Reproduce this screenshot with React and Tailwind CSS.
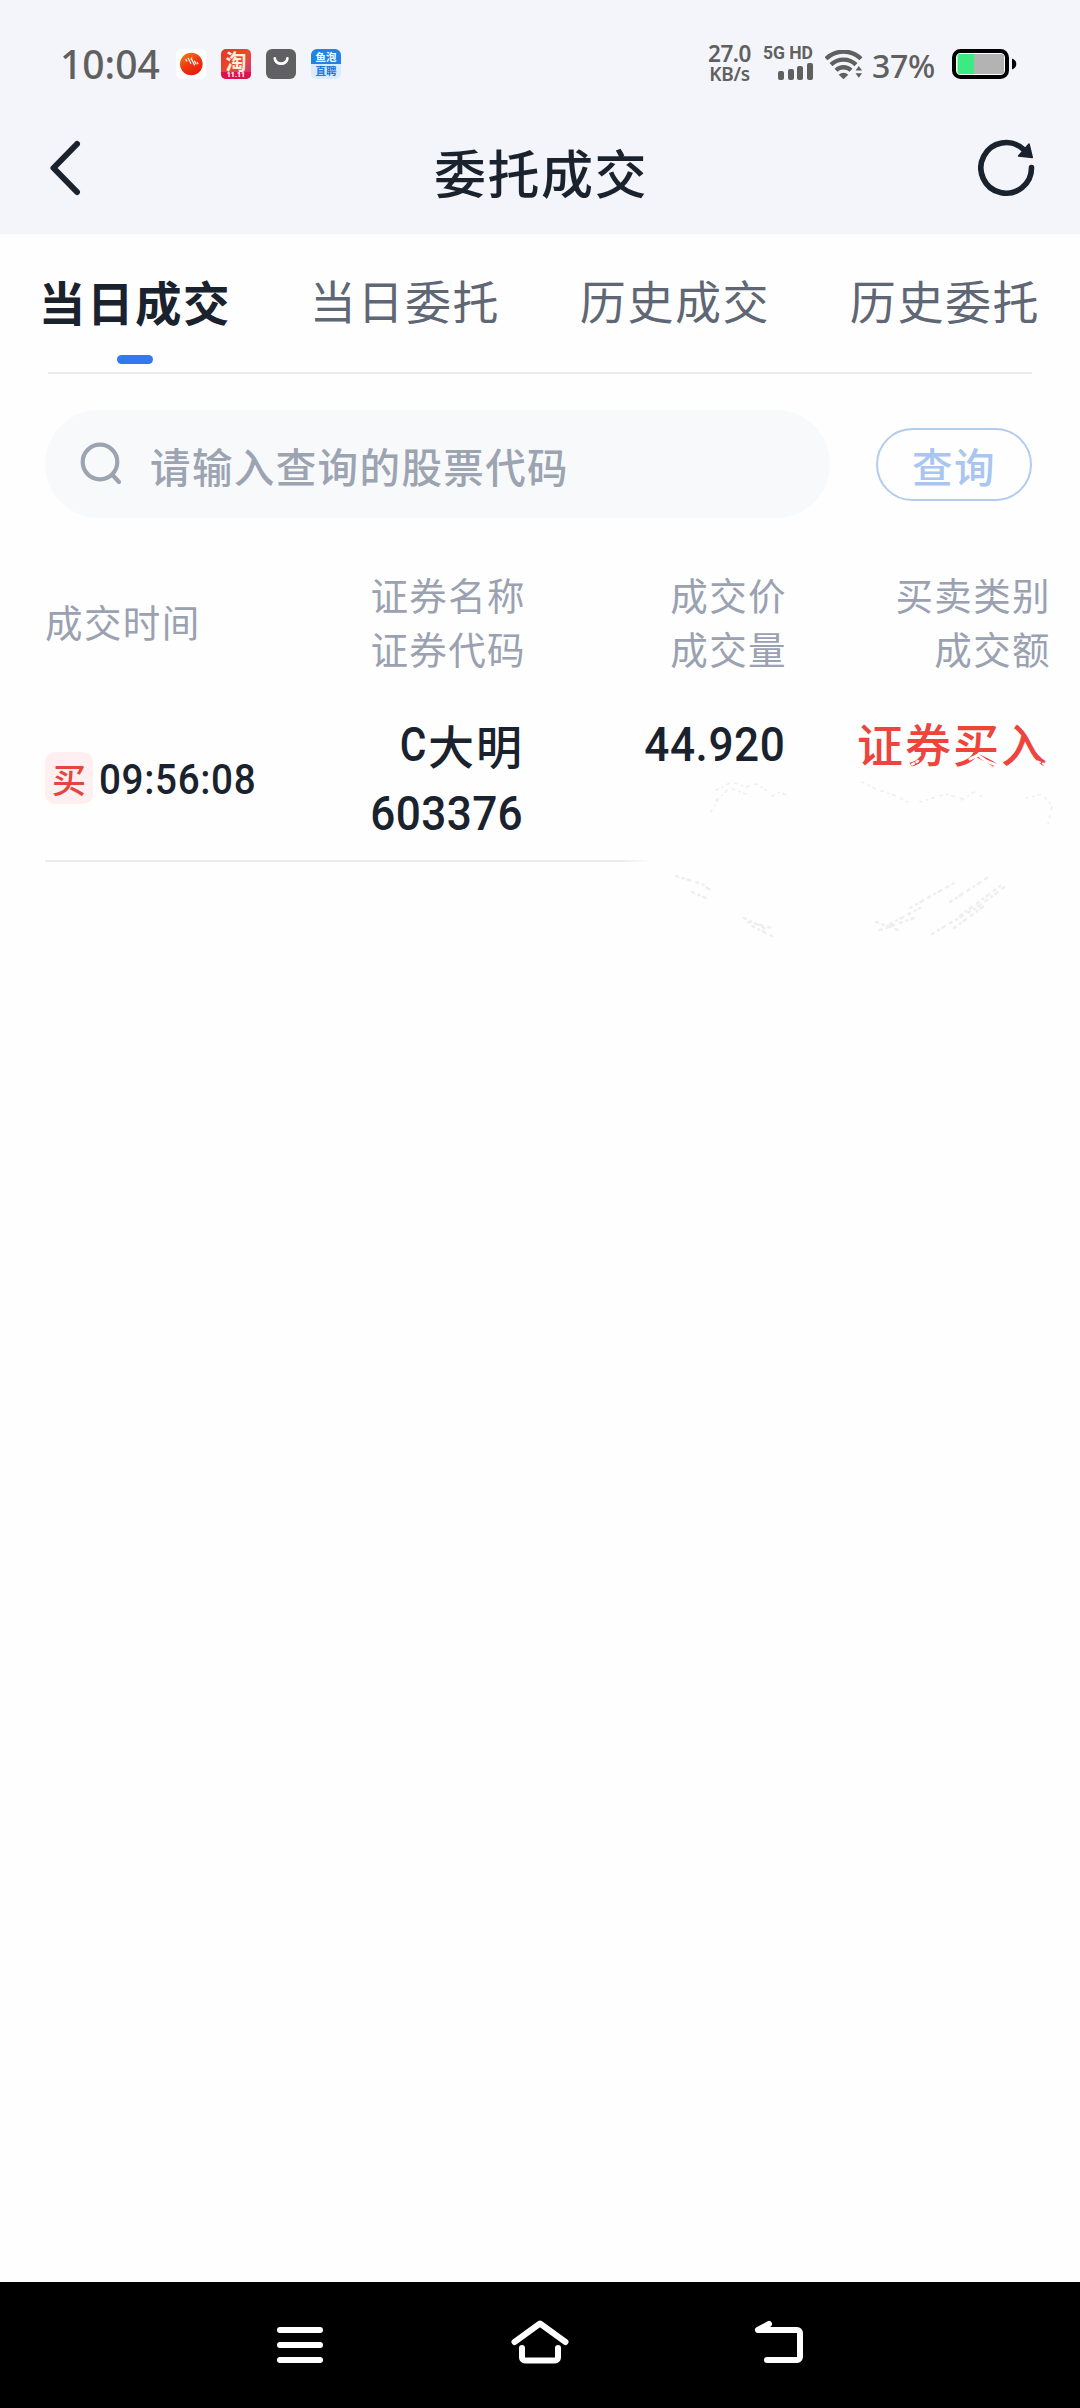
function NotificationIcons() {
  return (
    <div className="ml-[13px] flex gap-[15px] pt-[49px]">
      <svg width="30" height="30" viewBox="0 0 30 30">
        <defs>
          <linearGradient id="ball" x1="0" y1="0" x2="0.6" y2="1">
            <stop offset="0" stopColor="#f08a1c" />
            <stop offset="0.55" stopColor="#ee3a10" />
            <stop offset="1" stopColor="#ea1c0c" />
          </linearGradient>
        </defs>
        <rect width="30" height="30" rx="5" fill="#fff" />
        <circle cx="15.3" cy="15" r="11.3" fill="url(#ball)" />
        <path d="M9.800 10.500l1 1.600M12.200 9.300l2.600 5M15.800 9l-.8 1M15.800 10.500l2.600 5.500M18.600 12l1.400 3M21.300 13.500l.6 1.300" stroke="#fff" strokeWidth="1.2" strokeLinecap="round" />
      </svg>
      <div className="flex h-[30px] w-[30px] flex-col overflow-hidden rounded-[5px] bg-linear-to-br from-[#e5322c] via-[#ea4a2c] to-[#c42a86] text-center">
        <span className="h-[23px] font-['Noto_Sans_CJK_SC',sans-serif] text-[21px] leading-[22px] font-bold text-[#fff0dc]">淘</span>
        <span className="h-[7px] bg-[#e0104c] font-['Roboto',sans-serif] text-[7px] leading-[7px] font-black text-white">11.11</span>
      </div>
      <svg width="30" height="30" viewBox="0 0 30 30">
        <rect width="30" height="30" rx="6" fill="#606062" />
        <path d="M8.800 9.300a6.300 5.400 0 0 0 12.600 0" fill="none" stroke="#fff" strokeWidth="2.700" strokeLinecap="round" />
      </svg>
      <div className="flex h-[30px] w-[30px] flex-col overflow-hidden rounded-[6px] text-center font-['Noto_Sans_CJK_SC',sans-serif] text-[10.5px] font-bold">
        <span className="h-[15px] bg-[#2283e4] leading-[16px] text-white">鱼泡</span>
        <span className="h-[15px] bg-[#d9ebfe] leading-[14px] text-[#2077d8]">直聘</span>
      </div>
    </div>
  );
}

function StatusBar() {
  return (
    <div className="flex h-[100px] items-start pl-[60px] text-[#606060]">
      <div className="w-[103px] pt-[37px] font-['Noto_Sans',sans-serif] text-[39px] leading-[54px] font-medium whitespace-nowrap">10:04</div>
      <NotificationIcons />
      <div className="ml-auto flex items-start font-['Noto_Sans',sans-serif] font-medium">
        <div className="w-[47px] pt-[42px] text-center font-semibold whitespace-nowrap">
          <div className="text-[22.500px] leading-[24px] tracking-[-0.5px]">27.0</div>
          <div className="mt-[-1px] text-[19px] leading-[18px] tracking-[-0.3px]">KB/s</div>
        </div>
        <div className="ml-[11px] flex w-[49px] flex-col items-end pt-[45px]">
          <div className="font-['Roboto',sans-serif] text-[17.500px] leading-[16px] font-bold whitespace-nowrap">5G HD</div>
          <div className="mt-[2px] flex h-[17px] items-end gap-[3.7px]">
            <span className="h-[9px] w-[6px] rounded-[2px] bg-[#606060]" />
            <span className="h-[11px] w-[6px] rounded-[2px] bg-[#606060]" />
            <span className="h-[14px] w-[6px] rounded-[2px] bg-[#606060]" />
            <span className="h-[17px] w-[6px] rounded-[2px] bg-[#606060]" />
          </div>
        </div>
        <svg className="mt-[50px] ml-[12px]" width="38" height="30" viewBox="0 0 38 30" fill="none" stroke="#606060" strokeWidth="4.300">
          <path d="M1 8.800a25 25 0 0 1 35 0" />
          <path d="M6 14.600a18 18 0 0 1 25 0" />
          <path d="M11 20.200a11 11 0 0 1 15 0" />
          <path d="M18.500 29.300l-4.800-4.600a7 7 0 0 1 9.600 0z" fill="#606060" stroke="none" />
          <path d="M30.500 20.500l3.300-4.500 3.300 4.500zM30.500 23.200l3.300 4.500 3.300-4.500z" fill="#606060" stroke="none" />
        </svg>
        <div className="ml-[9px] w-[67px] pt-[45px] text-[32px] leading-[42px] tracking-[-0.3px] whitespace-nowrap">37%</div>
        <svg className="mt-[49px] mr-[63px] ml-[13px]" width="65" height="30" viewBox="0 0 65 30">
          <rect x="2" y="2" width="53" height="26" rx="6.500" fill="#fff" stroke="#000" strokeWidth="4" />
          <path d="M7.500 5H22v20H7.500a2 2 0 0 1-2-2V7a2 2 0 0 1 2-2z" fill="#3dea82" />
          <path d="M22 5h28a2 2 0 0 1 2 2v16a2 2 0 0 1-2 2H22z" fill="#b3b3b3" />
          <path d="M60 9.500c3 1 4.300 3 4.300 5.500s-1.300 4.500-4.300 5.500z" fill="#000" />
        </svg>
      </div>
    </div>
  );
}

function Header() {
  return (
    <div className="flex h-[134px] items-start justify-between pr-[44px] pl-[50px] text-[#1a222e]">
      <svg className="mt-[40px]" width="54" height="56" viewBox="0 0 54 56" fill="none" stroke="#1a222e" strokeWidth="6" strokeLinecap="round" strokeLinejoin="round">
        <path d="M27 4L3.500 28 27 52" />
      </svg>
      <h1 className="pt-[38px] font-['Noto_Sans_CJK_SC',sans-serif] text-[52px] leading-[68px] font-medium tracking-[1.500px]">委托成交</h1>
      <svg className="mt-[38px]" width="58" height="60" viewBox="0 0 58 60" fill="none">
        <path d="M53.500 29.500A25.300 25.300 0 1 1 45 11" stroke="#1a222e" strokeWidth="5.600" strokeLinecap="round" />
        <path d="M51 6L54.300 19.500 40.500 18z" fill="#1a222e" stroke="#1a222e" strokeWidth="1.500" strokeLinejoin="round" />
      </svg>
    </div>
  );
}

const tabs = ["当日成交", "当日委托", "历史成交", "历史委托"];

function Tabs() {
  return (
    <nav className="h-[138px] font-['Noto_Sans_CJK_SC',sans-serif] text-[46px] leading-[60px] tracking-[1.600px]">
      <div className="grid grid-cols-4 pt-[35px]">
        {tabs.map((tab, i) => (
          <div key={tab} className="flex flex-col items-center">
            <span className={i === 0 ? "mt-[2px] text-[46.500px] font-bold text-[#1a222e]" : "text-[#5f6775]"}>{tab}</span>
            {i === 0 && <span className="mt-[24px] h-[9px] w-[36px] rounded-full bg-[#3478f0]" />}
          </div>
        ))}
      </div>
    </nav>
  );
}

function Search() {
  return (
    <div className="mx-[48px] flex h-[146px] items-center border-t-2 border-[#ebebeb] pt-[36px] font-['Noto_Sans_CJK_SC',sans-serif] text-[40.500px] leading-[54px] font-medium tracking-[1.400px]">
      <div className="-ml-[3px] flex h-[108px] w-[785px] items-center rounded-full bg-[#f8f9fb] pl-[34px] text-[#9ca4b2]">
        <svg width="44" height="46" viewBox="0 0 44 46" fill="none" stroke="#9ca4b2" strokeWidth="4.200">
          <circle cx="21" cy="21" r="17.300" />
          <path d="M33.500 34l6.500 7" strokeLinecap="round" />
        </svg>
        <span className="mt-[4px] ml-[27px]">请输入查询的股票代码</span>
      </div>
      <button className="ml-auto flex h-[73px] w-[156px] items-center justify-center rounded-full border-2 border-[#b3cbec] pt-[3px] text-[#a9c6f0]">查询</button>
    </div>
  );
}

function TableHead() {
  return (
    <div className="mt-[46px] mb-[10px] grid h-[114px] grid-cols-[280px_201px_261px_264px] items-center pl-[45px] text-right font-['Noto_Sans_CJK_SC',sans-serif] text-[37.500px] leading-[54px] tracking-[1.400px] text-[#9aa1b0]">
      <div className="text-left">成交时间</div>
      <div>证券名称<br />证券代码</div>
      <div>成交价<br />成交量</div>
      <div>买卖类别<br />成交额</div>
    </div>
  );
}

/* Faint brush residue under the price and category cells */
function BrushMarks() {
  return (
    <svg className="pointer-events-none absolute top-[66px] right-0" width="440" height="190" viewBox="0 0 440 190" fill="none" stroke="#d4d4d4" strokeLinecap="round">
      <g strokeWidth="1.500" opacity="0.350" strokeDasharray="2 5 1 4 3 6">
        <path d="M76 36l16-8 14 5 10-3 10 6M76 46l14-12 16 6M71 58l8-14M132 42l8-4 8 4" />
        <path d="M222 28l14 7 18 6 16 8M280 48l26-8 20 6M322 46l12-8 10 6M386 44l16-4 10 12-4 18" />
        <path d="M36 122l26 8 8 6M52 138l14 6M104 164l24 12M112 172l20 10M108 168l24 6" strokeWidth="2.500" />
        <path d="M236 168l22 8M250 170l30-16M270 154l46-26M292 180l20-12 24-14 30-22M320 162l40-30M310 148l40-26M314 174l30-22M240 176l34-12" strokeWidth="2.500" />
      </g>
    </svg>
  );
}

/* White strokes that wear away the lower edge of the category text */
function WornEdge() {
  return (
    <svg className="pointer-events-none absolute top-[52px] right-0" width="190" height="40" viewBox="0 0 190 40" fill="none" stroke="#fefefe" strokeLinecap="round">
      <path d="M16 22l8-6 6-1M18 27l10-6M34 26l4 1" strokeWidth="2.500" strokeDasharray="2 3" />
      <path d="M80 19l8-4 8 6 10 4M88 21l8 3" strokeWidth="3" strokeDasharray="4 2" />
      <path d="M138 14l6 6 10 4M142 19l8 8" strokeWidth="2" strokeDasharray="3 3" />
    </svg>
  );
}

function TradeRow() {
  return (
    <div className="relative h-[188px] text-[#1a222e]">
      <div className="grid h-[174px] grid-cols-[280px_199px_261px_264px] items-start pl-[45px]">
        <div className="flex items-center pt-[62px]">
          <span className="h-[52px] w-[48px] rounded-[10px] bg-[#ffeff0] pt-[3px] text-center font-['Noto_Sans_CJK_SC',sans-serif] text-[34px] leading-[48px] font-medium text-[#e2463f]">买</span>
          <span className="mt-[5px] ml-[6px] origin-left scale-x-[0.920] font-['Roboto',sans-serif] text-[42px] leading-[50px] font-medium tracking-[0.700px]">09:56:08</span>
        </div>
        <div className="flex flex-col items-end pt-[25px] leading-[60px]">
          <span className="flex items-center">
            <span className="mt-[2px] mr-[2px] origin-right scale-x-[0.850] font-['Roboto',sans-serif] text-[48px] font-medium">C</span>
            <span className="font-['Noto_Sans_CJK_SC',sans-serif] text-[46px] font-medium tracking-[2px]">大明</span>
          </span>
          <span className="mt-[9px] mr-[1px] origin-right scale-x-[0.920] font-['Roboto',sans-serif] text-[48px] font-medium tracking-[0.400px]">603376</span>
        </div>
        <div className="flex justify-end pt-[27px] leading-[60px]">
          <span className="origin-right scale-x-[0.920] font-['Roboto',sans-serif] text-[48px] font-medium tracking-[0.600px]">44.920</span>
        </div>
        <div className="pt-[24px] text-right font-['Noto_Sans_CJK_SC',sans-serif] text-[46px] leading-[60px] font-medium tracking-[2px] whitespace-nowrap text-[#ee443c]">证券买入</div>
      </div>
      <div className="-mt-[2px] ml-[45px] h-[2px] w-[608px] bg-linear-to-r from-[#ececec] from-95% to-white" />
      <WornEdge />
      <BrushMarks />
    </div>
  );
}

function NavBar() {
  return (
    <div className="mt-auto flex h-[126px] items-center justify-center gap-[176px] bg-black">
      <svg width="64" height="64" viewBox="0 0 64 64" fill="none" stroke="#fff" strokeWidth="6" strokeLinecap="round">
        <path d="M12 17h40M12 32h40M12 47h40" />
      </svg>
      <svg width="64" height="64" viewBox="0 0 64 64" fill="none" stroke="#fff" strokeWidth="6" strokeLinecap="round" strokeLinejoin="round">
        <path d="M6.500 29L32 10.500 57.500 29" />
        <path d="M14 35v9.500a3 3 0 0 0 3 3h30a3 3 0 0 0 3-3V35" />
      </svg>
      <svg width="64" height="64" viewBox="0 0 64 64" fill="none" stroke="#fff" strokeWidth="6" strokeLinecap="round" strokeLinejoin="round">
        <path d="M21 11L10 17h39a3 3 0 0 1 3 3v24a3 3 0 0 1-3 3H19" />
      </svg>
    </div>
  );
}

export default function App() {
  return (
    <div className="flex h-[2408px] w-[1080px] flex-col overflow-hidden bg-[#fefefe]">
      <div className="bg-[#f4f5fa]">
        <StatusBar />
        <Header />
      </div>
      <Tabs />
      <Search />
      <TableHead />
      <TradeRow />
      <NavBar />
    </div>
  );
}
